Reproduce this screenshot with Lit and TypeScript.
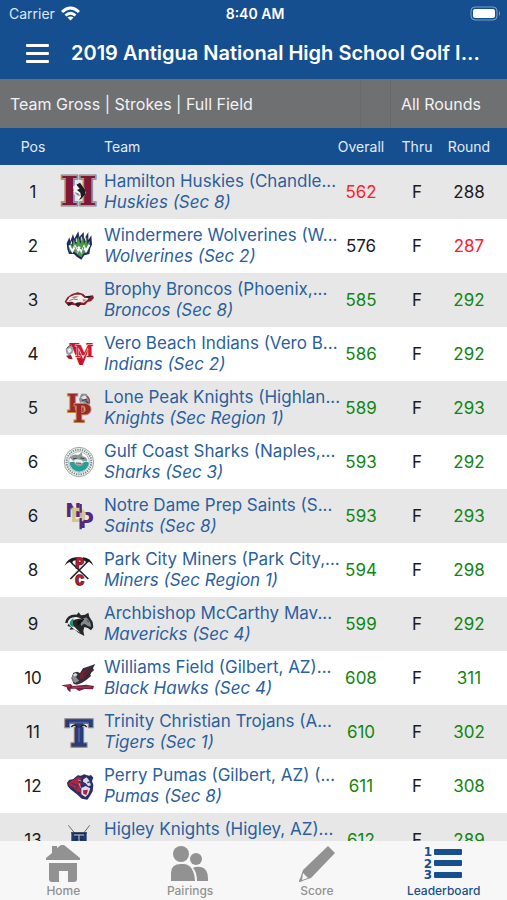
import { LitElement, html, css, svg } from "lit";
import { customElement, property } from "lit/decorators.js";
import { classMap } from "lit/directives/class-map.js";

type Tone = "over" | "under" | "even";

interface Team {
  pos: number;
  name: string;
  school: string;
  logo: string;
  overall: [number, Tone];
  round: [number, Tone];
}

const teams: Team[] = [
  { pos: 1, name: "Hamilton Huskies (Chandle...", school: "Huskies (Sec 8)", logo: "huskies", overall: [562, "under"], round: [288, "even"] },
  { pos: 2, name: "Windermere Wolverines (W...", school: "Wolverines (Sec 2)", logo: "wolverines", overall: [576, "even"], round: [287, "under"] },
  { pos: 3, name: "Brophy Broncos (Phoenix,...", school: "Broncos (Sec 8)", logo: "broncos", overall: [585, "over"], round: [292, "over"] },
  { pos: 4, name: "Vero Beach Indians (Vero B...", school: "Indians (Sec 2)", logo: "indians", overall: [586, "over"], round: [292, "over"] },
  { pos: 5, name: "Lone Peak Knights (Highlan...", school: "Knights (Sec Region 1)", logo: "lonepeak", overall: [589, "over"], round: [293, "over"] },
  { pos: 6, name: "Gulf Coast Sharks (Naples,...", school: "Sharks (Sec 3)", logo: "sharks", overall: [593, "over"], round: [292, "over"] },
  { pos: 6, name: "Notre Dame Prep Saints (S...", school: "Saints (Sec 8)", logo: "saints", overall: [593, "over"], round: [293, "over"] },
  { pos: 8, name: "Park City Miners (Park City,...", school: "Miners (Sec Region 1)", logo: "miners", overall: [594, "over"], round: [298, "over"] },
  { pos: 9, name: "Archbishop McCarthy Mav...", school: "Mavericks (Sec 4)", logo: "mavericks", overall: [599, "over"], round: [292, "over"] },
  { pos: 10, name: "Williams Field (Gilbert, AZ)...", school: "Black Hawks (Sec 4)", logo: "hawks", overall: [608, "over"], round: [311, "over"] },
  { pos: 11, name: "Trinity Christian Trojans (A...", school: "Tigers (Sec 1)", logo: "trojans", overall: [610, "over"], round: [302, "over"] },
  { pos: 12, name: "Perry Pumas (Gilbert, AZ) (...", school: "Pumas (Sec 8)", logo: "pumas", overall: [611, "over"], round: [308, "over"] },
  { pos: 13, name: "Higley Knights (Higley, AZ)...", school: "Knights (Sec 8)", logo: "higley", overall: [612, "over"], round: [289, "over"] },
];

const logos: Record<string, unknown> = {
  huskies: svg`
    <text class="slab" x="59" y="100" font-size="115" fill="#7d1836" stroke="#85868a" stroke-width="9">H</text>
    <text class="slab" x="59" y="100" font-size="115" fill="#7d1836" stroke="#d9d4d6" stroke-width="2">H</text>
    <path d="M42 44 L50 38 L60 33 L66 38 L76 48 L80 62 L74 74 L62 82 L54 80 L60 72 L45 67 L44 58 Z" fill="#f4f4f4"/>
    <path d="M52 38 L63 32 L70 42 L79 54 L78 68 L67 80 L60 84 L66 74 L64 62 L54 54 L62 50 Z" fill="#1d1d20"/>
    <path d="M46 60 L58 64 L64 72 L54 70 Z" fill="#8b8c90"/>`,
  wolverines: svg`
    <path d="M23 52 L31 34 L34 46 L42 24 L46 38 L58 16 L61 33 L74 18 L75 40 L88 18 L88 42 L97 28 L99 56 L94 66 L91 84 L76 88 L67 101 L53 92 L45 84 L30 84 L25 70 Z" fill="#252762"/>
    <path d="M31 76 L29 64 L35 49 L40 62 L44 40 L51 56 L58 30 L64 54 L72 32 L75 54 L85 32 L84 54 L93 45 L91 64 L86 78 L74 82 L67 94 L56 86 L47 78 Z" fill="#4a9b45"/>
    <path d="M37 46 L38 54 M52 37 L52 48 M67 32 L67 44 M80 34 L79 44" stroke="#dfeede" stroke-width="3"/>
    <path d="M31 58 L40 76 L48 61 L56 76 L62 62 M57 62 L68 78 L75 62 L81 75 L91 56" fill="none" stroke="#fff" stroke-width="6"/>
    <path d="M47 62 L56 79 M75 62 L69 81" stroke="#252762" stroke-width="2"/>`,
  broncos: svg`
    <path d="M17 65 L25 52 L39 42 L56 37 L72 41 L80 49 L102 46 L105 54 L96 64 L86 66 L78 75 L64 75 L58 82 L48 76 L34 74 L28 78 Z" fill="#8d1f2c"/>
    <path d="M22 66 L32 51 L48 44 L66 44 L77 54 L90 54 L84 61 L74 68 L62 66 L50 72 L40 65 Z" fill="#f5efed"/>
    <path d="M25 70 L40 66 L36 76 L28 77 Z M47 71 L56 67 L66 72 L57 80 Z M80 48 L98 48 L88 56 Z" fill="#242024"/>
    <path d="M36 52 L50 48 L60 50 L47 55 Z M70 57 L84 59 L74 65 Z" fill="#a98a86"/>
    <path d="M31 62 L43 57 L56 59" fill="none" stroke="#5e3a3e" stroke-width="2"/>`,
  indians: svg`
    <text class="slab" x="66" y="93" font-size="88" fill="#c8142b">V</text>
    <text class="slab" x="76" y="69" font-size="52" fill="#cf172d" stroke="#f6dfe1" stroke-width="3">M</text>
    <path d="M20 45 L31 34 L43 43 L41 57 L30 65 L22 58 Z" fill="#9a9da3"/>
    <path d="M25 46 L34 41 L38 51 L29 58 Z" fill="#eceef0"/>
    <path d="M21 65 L36 63 L41 76 L29 74 Z" fill="#a41527"/>
    <path d="M23 43 L33 34 L40 37" fill="none" stroke="#4c4f56" stroke-width="3"/>`,
  lonepeak: svg`
    <text class="slab" x="49" y="72" font-size="72" fill="#9c2730" stroke="#c08a4a" stroke-width="6">L</text>
    <path d="M60 34 L67 17 L82 17 L90 29 L91 47 L80 51 L73 43 L63 44 Z" fill="#8b8d94"/>
    <path d="M66 28 L78 22 L84 30 L74 36 Z" fill="#e1e3e6"/>
    <path d="M69 37 L83 34 M80 38 L88 45" stroke="#3f4048" stroke-width="4"/>
    <path d="M84 25 Q95 34 90 48" stroke="#b7384b" stroke-width="4" fill="none"/>
    <text class="slab" x="70" y="102" font-size="70" fill="#9c2730" stroke="#c08a4a" stroke-width="6">P</text>`,
  sharks: svg`
    <circle cx="60" cy="60" r="44" fill="#f7f7f7" stroke="#68797b" stroke-width="2"/>
    <circle cx="60" cy="60" r="37" fill="none" stroke="#7c8a8b" stroke-width="6" stroke-dasharray="4 3"/>
    <circle cx="60" cy="60" r="31" fill="#fff" stroke="#829393" stroke-width="2"/>
    <path d="M31 62 Q44 55 51 64 Q61 74 72 63 Q80 56 90 62 Q86 86 60 89 Q36 86 31 62 Z" fill="#269f98"/>
    <path d="M32 47 Q44 33 58 39 L69 31 L70 43 Q85 45 85 58 L75 58 L72 70 L60 74 L48 69 L43 57 Z" fill="#8c9799"/>
    <path d="M43 57 L50 52 L65 53 L75 59 L66 67 L53 67 Z" fill="#eef2f2"/>
    <path d="M43 50 L53 49 M64 48 L76 50 M51 63 L67 64" stroke="#33474a" stroke-width="3"/>`,
  saints: svg`
    <text class="block" x="43" y="63" font-size="58" fill="#542a78">N</text>
    <text class="block" x="82" y="97" font-size="62" fill="#542a78">P</text>
    <text class="block" x="58" y="79" font-size="58" fill="#d3c78b" stroke="#e7e7e7" stroke-width="2">D</text>
    <path d="M65 24 V50 M65 66 V100" stroke="#542a78" stroke-width="7"/>`,
  miners: svg`
    <path d="M34 87 L82 39 M88 87 L38 39" stroke="#222" stroke-width="5"/>
    <path d="M16 48 Q26 24 50 22 L52 30 L42 33 L39 41 L31 36 Q22 41 16 48 Z M104 48 Q95 23 72 22 L68 30 L79 33 L82 41 L90 35 Q98 40 104 48 Z" fill="#1d1d1f"/>
    <text class="typed" x="62" y="54" font-size="44" fill="#b91e2f" stroke="#431016" stroke-width="4">P</text>
    <text class="typed" x="62" y="105" font-size="44" fill="#b91e2f" stroke="#431016" stroke-width="4">C</text>`,
  mavericks: svg`
    <path d="M18 56 Q24 30 53 32 L59 25 L66 34 L78 32 L88 26 L91 38 L101 54 L103 70 L96 79 L86 72 L76 69 L73 81 L76 96 L58 86 L46 76 L32 77 L36 69 L25 66 L30 58 Z" fill="#25282b"/>
    <path d="M26 56 Q29 40 51 39 L67 43 L56 45 Q39 46 38 59 L46 68 L64 86 L48 77 L36 68 Z" fill="#f2f4f3"/>
    <path d="M32 62 Q31 48 45 43 Q38 55 45 69 Q37 69 32 62 Z" fill="#218f7f"/>
    <path d="M64 47 L82 40 L93 53 L97 68 L88 67 L76 59 L66 66 Z" fill="#85898c"/>
    <path d="M56 52 L75 45 L68 54 L57 64 Z M83 49 L90 54" fill="#111" stroke="#111" stroke-width="2"/>`,
  hawks: svg`
    <path d="M37 61 L43 44 L54 41 L63 45 L72 31 L86 26 L109 18 L102 30 L105 37 L93 47 L96 54 L82 66 L68 75 L53 80 L44 77 Z" fill="#303038"/>
    <path d="M61 49 L77 37 L98 26 L86 42 L78 60 L64 64 Z" fill="#772035"/>
    <path d="M39 57 L46 45 L56 49 L51 58 L61 68 L49 75 L41 70 Z" fill="#8c8c91"/>
    <path d="M42 50 L51 45 L55 52 L45 55 Z" fill="#ddd"/>
    <path d="M7 82 L35 78 L41 84 L82 80 L105 84 L102 94 L77 93 L60 99 L50 92 L35 92 L34 103 L26 96 L23 88 Z" fill="#7e1c39"/>
    <path d="M40 88 L96 87 M19 84 L34 84" stroke="#a9697a" stroke-width="2"/>
    <path d="M73 52 L91 32 M75 60 L96 45" stroke="#24222a" stroke-width="3"/>`,
  trojans: svg`
    <text class="slab" x="60" y="101" font-size="108" fill="#293c7d" stroke="#85888e" stroke-width="10">T</text>
    <text class="slab" x="60" y="101" font-size="108" fill="#293c7d" stroke="#1b2448" stroke-width="3">T</text>
    <path d="M31 32 H89 M60 48 V91" stroke="#4b60a0" stroke-width="5"/>
    <path d="M37 45 Q46 34 55 45 M65 45 Q74 34 83 45" fill="none" stroke="#191d29" stroke-width="4"/>
    <path d="M42 44 H50 M70 44 H78" stroke="#d7c69a" stroke-width="3"/>`,
  pumas: svg`
    <path d="M24 50 L30 42 L43 39 L56 28 L66 29 L75 25 L90 29 L96 27 L103 35 L99 45 L103 57 L101 76 L93 90 L85 101 L68 98 L57 88 L45 78 L34 70 L26 60 Z" fill="#282e66"/>
    <path d="M28 50 L41 43 L58 33 L70 37 L57 46 L70 53 L62 63 L68 82 L52 75 L44 65 L33 60 Z" fill="#b2233f"/>
    <path d="M73 40 L83 34 L91 44 L96 58 L88 61 L80 52 L72 47 Z M67 66 L80 60 L94 67 L88 84 L79 93 L67 85 Z" fill="#dcdcec"/>
    <path d="M72 73 L87 71 L82 87 L73 83 Z" fill="#a5213e"/>
    <path d="M66 52 L80 57 M85 50 L97 47 M38 52 L56 58 L52 69" fill="none" stroke="#343a78" stroke-width="4"/>
    <path d="M57 42 L67 45 M60 52 L66 67" stroke="#ddd7e4" stroke-width="2"/>`,
  higley: svg`
    <path d="M28 16 L46 38 L60 58 L92 102 M92 16 L75 38 L60 58 L28 102" fill="none" stroke="#626773" stroke-width="3"/>
    <path d="M40 38 H80 L83 44 V64 L60 80 L37 64 V44 Z" fill="#20396d"/>
    <path d="M36 39 H84 M48 49 H72 M49 58 H71" stroke="#17294e" stroke-width="4"/>
    <path d="M45 45 H75 M60 45 V70" stroke="#c6ccd8" stroke-width="3"/>`,
};

@customElement("team-logo")
export class TeamLogo extends LitElement {
  @property() name = "";

  static styles = css`
    :host { display: block; width: 40px; height: 40px; }
    .mark { display: block; width: 40px; height: 40px; }
    .slab, .block, .typed {
      font-family: "DejaVu Serif", serif;
      font-weight: 700;
      text-anchor: middle;
      paint-order: stroke;
    }
    .block { font-family: "DejaVu Sans", sans-serif; }
    .typed { font-family: "Liberation Mono", monospace; }
  `;

  render() {
    return html`<svg class="mark" viewBox="0 0 120 120" aria-hidden="true">${logos[this.name]}</svg>`;
  }
}

const tabs = [
  {
    label: "Home",
    icon: svg`
      <path d="M3 13 L9 8 V1 H14 V3 L18 0 H21 L37 13 V15 H3 Z"/>
      <path d="M6 18 H34 V34 Q34 37 31 37 H25 V26 H16 V37 H9 Q6 37 6 34 Z"/>`,
  },
  {
    label: "Pairings",
    icon: svg`
      <circle cx="11" cy="9" r="8"/>
      <circle cx="26" cy="14" r="6"/>
      <path d="M1 36 V28 Q1 19 11 19 H14 Q24 20 25 36 Z"/>
      <path d="M25 22 Q38 20 38 34 V36 H27 Q27 27 23 23 Z"/>`,
  },
  {
    label: "Score",
    icon: svg`
      <path d="M31 1 L38 8 L14 33 L2 37 L6 25 Z"/>
      <path d="M6 28 L11 33 L5 35 Z" fill="#f7f7f7"/>
      <path d="M2 37 L3 33 L6 36 Z"/>`,
  },
  {
    label: "Leaderboard",
    active: true,
    icon: svg`
      <text class="numeral" x="4" y="11">1</text>
      <text class="numeral" x="4" y="23">2</text>
      <text class="numeral" x="4" y="34">3</text>
      <rect x="10" y="4" width="28" height="6" rx="1"/>
      <rect x="10" y="15" width="28" height="6" rx="1"/>
      <rect x="10" y="27" width="28" height="6" rx="1"/>`,
  },
];

@customElement("app-root")
export class AppRoot extends LitElement {
  static styles = css`
    :host {
      display: flex;
      flex-direction: column;
      height: 100vh;
      overflow: hidden;
      background: #fff;
      color: #1c1c1c;
      font-family: Inter, "Liberation Sans", sans-serif;
    }
    button { font: inherit; color: inherit; border: 0; margin: 0; padding: 0; background: none; cursor: pointer; }
    .top { flex: none; background: #164f90; color: #fff; }
    .status {
      display: grid;
      grid-template-columns: 1fr auto 1fr;
      align-items: center;
      height: 27px;
      padding: 0 6px 0 9px;
      font-size: 14px;
    }
    .carrier { display: flex; align-items: center; gap: 6px; color: #dce7f4; }
    .wifi { width: 19px; height: 15px; }
    .clock { font-weight: 600; }
    .battery { justify-self: end; width: 31px; height: 15px; }
    .bar { display: flex; align-items: center; gap: 22px; height: 52px; padding: 0 24px 0 26px; box-sizing: border-box; }
    .menu { display: flex; flex: none; }
    .menu-icon { width: 23px; height: 21px; }
    .title {
      flex: 1;
      min-width: 0;
      margin: 0;
      font-size: 20px;
      font-weight: 600;
      line-height: 28px;
      white-space: nowrap;
    }
    .filters { flex: none; display: flex; height: 49px; background: #6f7072; color: #f2f2f2; font-size: 16px; }
    .scope { flex: 1; text-align: left; padding-left: 10px; border-right: 1px solid #68696b; }
    .spacer { width: 29px; border-right: 1px solid #68696b; }
    .rounds { width: 116px; padding-right: 26px; text-align: right; }
    .board { flex: 1; min-height: 0; overflow: hidden; }
    .table { width: 100%; table-layout: fixed; border-collapse: collapse; }
    .col-pos { width: 59px; }
    .col-logo { width: 40px; }
    .col-score { width: 56px; }
    .col-round { width: 62px; }
    th { height: 37px; padding: 0; background: #164f90; color: #e3ecf7; font-size: 14px; font-weight: 400; text-align: center; }
    td { height: 54px; padding: 0; font-size: 17px; text-align: center; vertical-align: middle; }
    .pos { padding-left: 7px; }
    .round { padding-right: 14px; }
    .team { padding-left: 5px; text-align: left; }
    .stripe { background: #e7e7e7; }
    .link { display: block; color: #2b5f9f; text-decoration: none; white-space: nowrap; line-height: 21px; }
    .name { display: block; }
    .school { display: block; font-style: italic; }
    .under { color: #ff2027; }
    .over { color: #118511; }
    .tabs {
      flex: none;
      display: grid;
      grid-template-columns: repeat(4, 1fr);
      height: 59px;
      background: #f7f7f7;
    }
    .tab {
      display: flex;
      flex-direction: column;
      align-items: center;
      padding-top: 4px;
      color: #929292;
      text-decoration: none;
      font-size: 12px;
      font-weight: 500;
      line-height: 16px;
    }
    .active { color: #164f90; }
    .tab-icon { width: 40px; height: 38px; flex: none; fill: currentColor; }
    .numeral { font: 700 12px "DejaVu Sans", sans-serif; text-anchor: middle; }
  `;

  render() {
    return html`
      <header class="top">
        <div class="status">
          <span class="carrier">
            Carrier
            <svg class="wifi" viewBox="0 0 19 15" fill="none" stroke="#fff" stroke-width="3" aria-hidden="true">
              <path d="M1 6 Q9.500 -2 18 6"/>
              <path d="M4.500 9.500 Q9.500 5 14.500 9.500"/>
              <path d="M9.500 14.500 L6.500 11.500 Q9.500 9.500 12.500 11.500 Z" fill="#fff" stroke="none"/>
            </svg>
          </span>
          <span class="clock">8:40 AM</span>
          <svg class="battery" viewBox="0 0 31 15" aria-hidden="true">
            <rect x="1" y="1" width="26" height="13" rx="4" fill="none" stroke="#7f9fc4"/>
            <rect x="3" y="3" width="22" height="9" rx="2" fill="#fff"/>
            <path d="M29 5 Q31 7.500 29 10 Z" fill="#7f9fc4"/>
          </svg>
        </div>
        <div class="bar">
          <button class="menu" aria-label="Menu">
            <svg class="menu-icon" viewBox="0 0 23 21" fill="#fff" aria-hidden="true">
              <rect width="23" height="3" y="1" rx="1"/>
              <rect width="23" height="3" y="9" rx="1"/>
              <rect width="23" height="3" y="17" rx="1"/>
            </svg>
          </button>
          <h1 class="title">2019 Antigua National High School Golf I...</h1>
        </div>
      </header>
      <div class="filters">
        <button class="scope">Team Gross | Strokes | Full Field</button>
        <span class="spacer"></span>
        <button class="rounds">All Rounds</button>
      </div>
      <main class="board">
        <table class="table">
          <colgroup>
            <col class="col-pos" /><col class="col-logo" /><col />
            <col class="col-score" /><col class="col-score" /><col class="col-round" />
          </colgroup>
          <thead>
            <tr>
              <th class="pos" scope="col">Pos</th>
              <th></th>
              <th class="team" scope="col">Team</th>
              <th scope="col">Overall</th>
              <th scope="col">Thru</th>
              <th class="round" scope="col">Round</th>
            </tr>
          </thead>
          <tbody>
            ${teams.map(
              (t, i) => html`
                <tr class=${classMap({ stripe: i % 2 === 0 })}>
                  <td class="pos">${t.pos}</td>
                  <td><team-logo name=${t.logo}></team-logo></td>
                  <td class="team">
                    <a class="link" href="#team">
                      <span class="name">${t.name}</span>
                      <span class="school">${t.school}</span>
                    </a>
                  </td>
                  <td class=${t.overall[1]}>${t.overall[0]}</td>
                  <td>F</td>
                  <td class="round ${t.round[1]}">${t.round[0]}</td>
                </tr>
              `
            )}
          </tbody>
        </table>
      </main>
      <nav class="tabs">
        ${tabs.map(
          (tab) => html`
            <a class=${classMap({ tab: true, active: !!tab.active })} href="#${tab.label}">
              <svg class="tab-icon" viewBox="0 0 40 38" aria-hidden="true">${tab.icon}</svg>
              ${tab.label}
            </a>
          `
        )}
      </nav>
    `;
  }
}
